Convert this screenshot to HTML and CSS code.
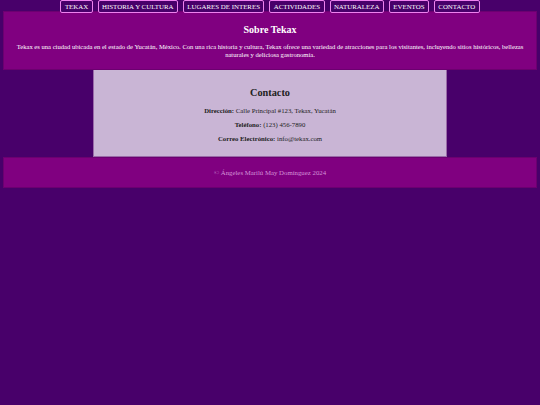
FILE: index.html
```html
<!DOCTYPE html>
<html lang="es">
<head>
<meta charset="utf-8">
<title>Tekax</title>
<link rel="stylesheet" href="styles.css">
</head>
<body>
<nav class="nav">
  <a class="nav-btn" href="#">TEKAX</a>
  <a class="nav-btn" href="#">HISTORIA Y CULTURA</a>
  <a class="nav-btn" href="#">LUGARES DE INTERES</a>
  <a class="nav-btn" href="#">ACTIVIDADES</a>
  <a class="nav-btn" href="#">NATURALEZA</a>
  <a class="nav-btn" href="#">EVENTOS</a>
  <a class="nav-btn" href="#">CONTACTO</a>
</nav>
<section class="about">
  <h2 class="about-title">Sobre Tekax</h2>
  <p class="about-text">Tekax es una ciudad ubicada en el estado de Yucatán, México. Con una rica historia y cultura, Tekax ofrece una variedad de atracciones para los visitantes, incluyendo sitios históricos, bellezas naturales y deliciosa gastronomía.</p>
</section>
<section class="contact">
  <h2 class="contact-title">Contacto</h2>
  <p class="contact-line"><strong>Dirección:</strong> Calle Principal #123, Tekax, Yucatán</p>
  <p class="contact-line"><strong>Teléfono:</strong> (123) 456-7890</p>
  <p class="contact-line"><strong>Correo Electrónico:</strong> info@tekax.com</p>
</section>
<footer class="footer">
  <p class="footer-text">© Ángeles Marilú May Domínguez 2024</p>
</footer>
</body>
</html>
```
FILE: styles.css
```css
html, body {
  margin: 0;
  padding: 0;
}
body {
  background: #48006a;
  font-family: "Liberation Serif", "Times New Roman", serif;
  color: #fff;
}
.nav {
  display: flex;
  justify-content: center;
  align-items: flex-start;
  gap: 5px;
  height: 11px;
  position: relative;
  z-index: 1;
}
.nav-btn {
  display: block;
  color: #fff;
  text-decoration: none;
  font-size: 6.9px;
  line-height: 9px;
  padding: 1px 3.4px;
  border: 1.5px solid #ee82ee;
  border-radius: 2px;
  background: #48006a;
  white-space: nowrap;
}
.about {
  margin: 0 3px;
  background: #800080;
  border: 1px solid #6c0070;
  padding: 1px 7px 0;
  height: 56px;
  text-align: center;
}
.about-title {
  margin: 10px 0 0;
  font-size: 10px;
  line-height: 14px;
  font-weight: bold;
}
.about-text {
  margin: 6px 0 0;
  font-size: 6.6px;
  line-height: 8px;
}
.contact {
  width: 354px;
  margin: 0 auto;
  background: #c9b5d5;
  border: 1px solid #9a6aa8;
  border-top: none;
  height: 87px;
  color: #222;
  text-align: center;
  padding-top: 1px;
  box-sizing: border-box;
}
.contact-title {
  margin: 15px 0 0;
  font-size: 10.3px;
  line-height: 14px;
  font-weight: bold;
}
.contact-line {
  margin: 6px 0 0;
  font-size: 6.75px;
  line-height: 10px;
}
.contact-line + .contact-line {
  margin-top: 4px;
}
.footer {
  margin: 0 3px;
  background: #800080;
  border: 1px solid #6c0070;
  height: 29px;
  display: flex;
  align-items: center;
  justify-content: center;
}
.footer-text {
  margin: 0;
  font-size: 6.8px;
  color: #d494d8;
}
```
